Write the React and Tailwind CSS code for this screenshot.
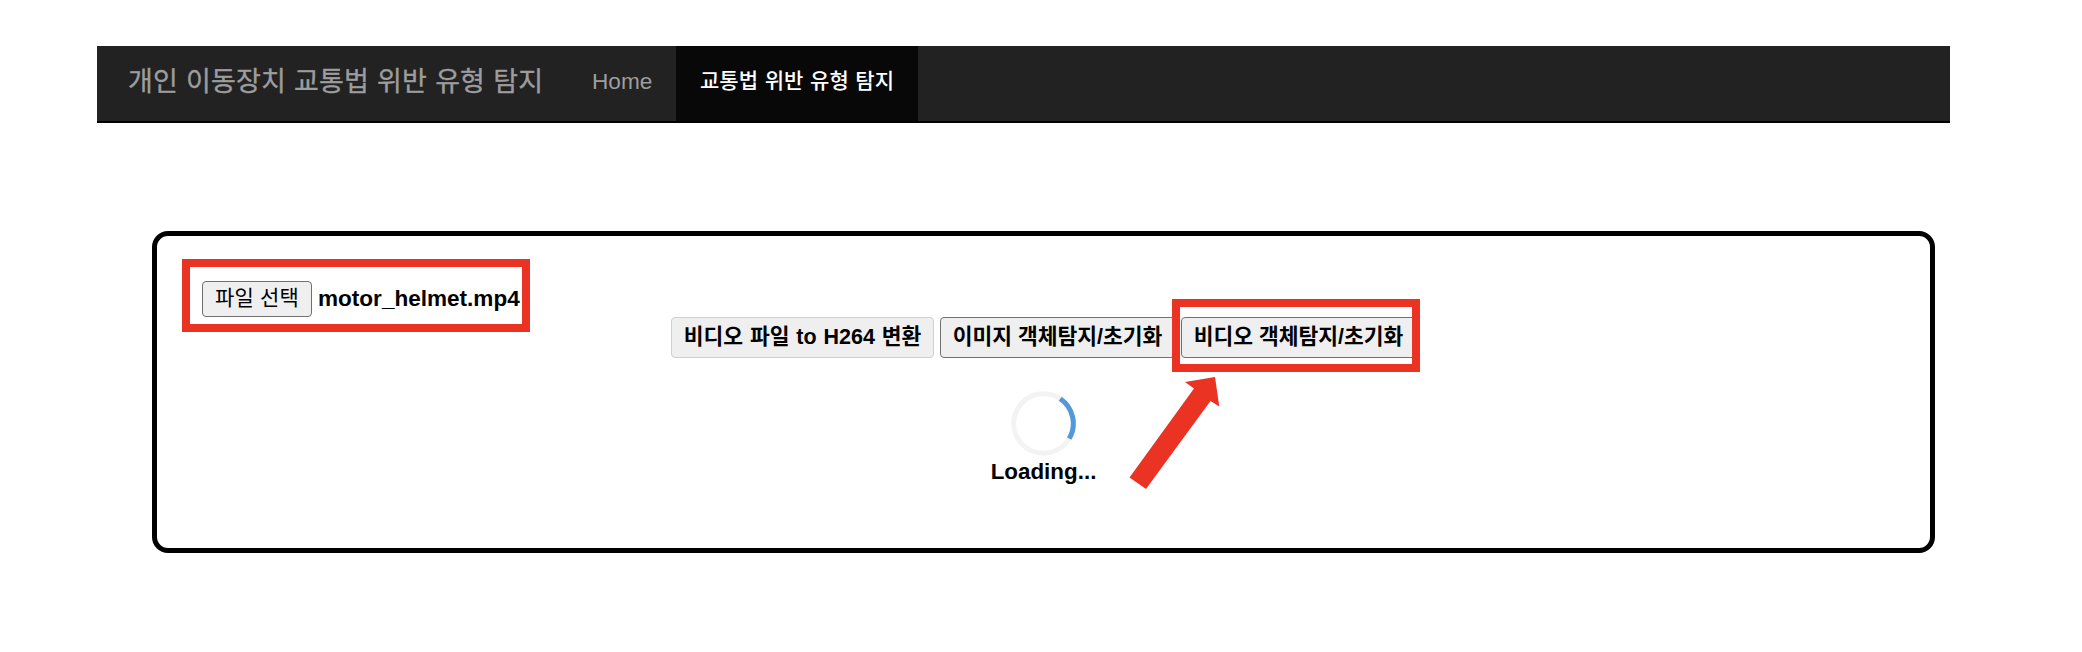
function NavBar() {
  return (
    <nav className="flex h-[77px] w-[1853px] border-b-2 border-black bg-[#222222] text-[#9d9d9d]">
      <a className="block w-[470px] shrink-0 whitespace-nowrap pl-[31px] pt-[16px] text-[27px] leading-[40px] tracking-[0.1px] [-webkit-text-stroke:0.35px_#9d9d9d] [word-spacing:0.6px]">
        개인 이동장치 교통법 위반 유형 탐지
      </a>
      <a className="block w-[109px] shrink-0 pl-[25px] pt-[16px] text-[22.6px] leading-[40px]">Home</a>
      <a className="block w-[242px] shrink-0 whitespace-nowrap bg-[#080808] pl-[24px] pt-[15px] text-[21px] font-medium leading-[40px] tracking-[0.05px] text-white [word-spacing:0.7px]">
        교통법 위반 유형 탐지
      </a>
    </nav>
  );
}

function Highlight({ className }) {
  return <div className={`pointer-events-none absolute border-8 border-[#ea3323] ${className}`} />;
}

function ActionButton({ className, children }) {
  return (
    <button
      className={`flex h-[41px] shrink-0 items-center justify-center whitespace-nowrap rounded-[4px] border bg-[#efefef] pt-px text-[21.5px] font-bold leading-none text-black ${className}`}
    >
      {children}
    </button>
  );
}

function Spinner() {
  return (
    <svg className="h-[65px] w-[65px]" viewBox="0 0 65 65" fill="none" strokeWidth="5">
      <circle cx="32.5" cy="32.5" r="29.8" stroke="#f3f3f3" />
      <path d="M49.2 7.8A29.8 29.8 0 0 1 58.2 47.6" stroke="#5199d8" />
    </svg>
  );
}

export default function App() {
  return (
    <div className="relative h-[652px] w-[2082px] overflow-hidden bg-white pl-[97px] pt-[46px] font-['Liberation_Sans','Noto_Sans_CJK_KR',sans-serif]">
      <NavBar />
      <main className="ml-[55px] mt-[108px] h-[322px] w-[1783px] rounded-[16px] border-[5px] border-black pl-[45px] pt-[45px] font-bold text-black">
        <div className="flex h-[36px] items-center">
          <button className="flex h-[36px] w-[110px] items-center justify-center whitespace-nowrap rounded-[4px] border border-[#707070] bg-[#efefef] pb-[4px] text-[21px] font-normal leading-none tracking-[0.2px]">
            파일 선택
          </button>
          <span className="ml-[6px] text-[22.55px] leading-none">motor_helmet.mp4</span>
        </div>
        <div className="ml-[469px] flex gap-[6px]">
          <ActionButton className="w-[263px] border-[#d0d0d0] [word-spacing:0.9px]">비디오 파일 to H264 변환</ActionButton>
          <ActionButton className="w-[235px] border-[#707070]">이미지 객체탐지/초기화</ActionButton>
          <ActionButton className="w-[235px] border-[#707070]">비디오 객체탐지/초기화</ActionButton>
        </div>
        <div className="ml-[769px] mt-[32.5px] flex w-[145px] flex-col items-center">
          <Spinner />
          <span className="mt-[4.5px] text-[22.4px] leading-[24px]">Loading...</span>
        </div>
      </main>
      <Highlight className="left-[182px] top-[259px] h-[73px] w-[348px]" />
      <Highlight className="left-[1172px] top-[299px] h-[73px] w-[248px]" />
      <svg className="absolute left-[1125px] top-[372px] h-[120px] w-[100px]" viewBox="1125 372 100 120">
        <path d="M1215 377L1185 382L1194 388.500L1129.500 477.500L1146 489L1210.500 401L1219.300 406.500Z" fill="#ea3323" />
      </svg>
    </div>
  );
}
